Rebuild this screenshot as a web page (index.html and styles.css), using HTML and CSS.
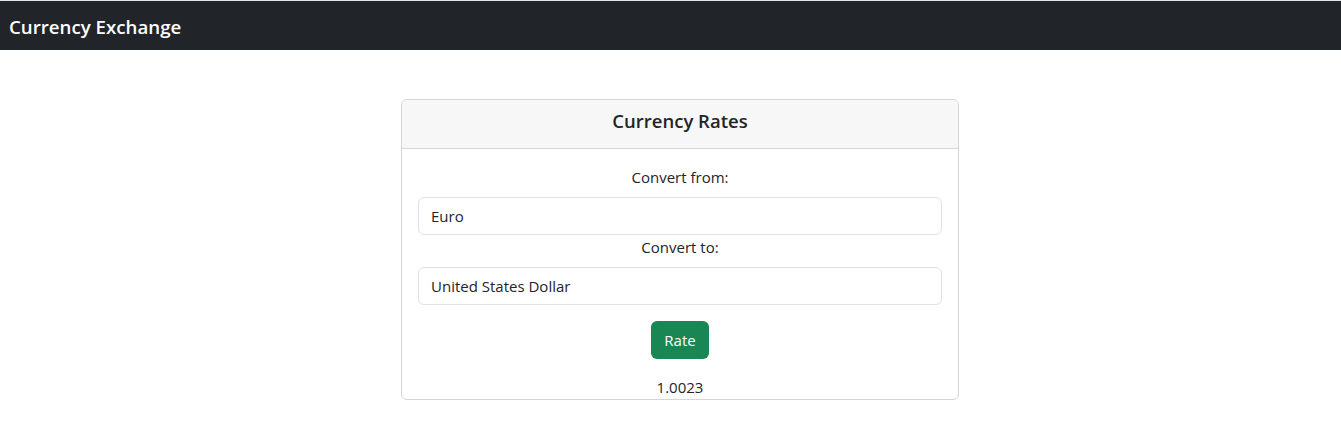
FILE: index.html
```html
<!DOCTYPE html>
<html lang="en">
<head>
<meta charset="utf-8">
<title>Currency Exchange</title>
<link rel="stylesheet" href="styles.css">
</head>
<body>
<nav class="navbar">
  <span class="brand">Currency Exchange</span>
</nav>
<main class="page">
  <section class="card">
    <header class="card-header">
      <h5 class="card-title">Currency Rates</h5>
    </header>
    <div class="card-body">
      <label class="form-label" for="from">Convert from:</label>
      <input class="form-control" id="from" type="text" value="Euro">
      <label class="form-label" for="to">Convert to:</label>
      <input class="form-control" id="to" type="text" value="United States Dollar">
      <button class="btn" type="button">Rate</button>
      <div class="result">1.0023</div>
    </div>
  </section>
</main>
</body>
</html>
```
FILE: styles.css
```css
* { box-sizing: border-box; }
html, body { margin: 0; padding: 0; }
body {
  font-family: "Open Sans", "Noto Sans", sans-serif;
  font-size: 15px;
  line-height: 24px;
  color: #212529;
  background: #fff;
  border-top: 1px solid #e4e4e4;
}
.navbar {
  height: 49px;
  background: #212529;
  display: flex;
  align-items: center;
  padding: 0 9px;
}
.brand {
  color: #fff;
  font-size: 18.7px;
  font-weight: 600;
  line-height: 24px;
  padding-top: 2px;
}
.page {
  display: flex;
  justify-content: center;
  padding: 49px 0 0 19px;
}
.card {
  width: 558px;
  border: 1px solid #d6d6d6;
  border-radius: 6px;
  overflow: hidden;
}
.card-header {
  background: #f7f7f7;
  border-bottom: 1px solid #d6d6d6;
  height: 49px;
  display: flex;
  align-items: center;
  justify-content: center;
  padding-bottom: 6px;
}
.card-title {
  margin: 0;
  font-size: 18.5px;
  font-weight: 600;
  line-height: 24px;
}
.card-body {
  padding: 16px 16px 0;
  display: flex;
  flex-direction: column;
  align-items: center;
}
.form-label {
  display: block;
  text-align: center;
  line-height: 24px;
  margin-bottom: 8px;
}
.form-control {
  width: 100%;
  height: 38px;
  border: 1px solid #dee2e6;
  border-radius: 6px;
  padding: 6px 12px;
  font: inherit;
  color: #212529;
  background: #fff;
}
.btn {
  margin-top: 16px;
  height: 38px;
  width: 58px;
  border: none;
  border-radius: 6px;
  background: #198754;
  color: #fff;
  font: inherit;
  padding: 0;
}
.result {
  margin-top: 16px;
  line-height: 24px;
}
```
